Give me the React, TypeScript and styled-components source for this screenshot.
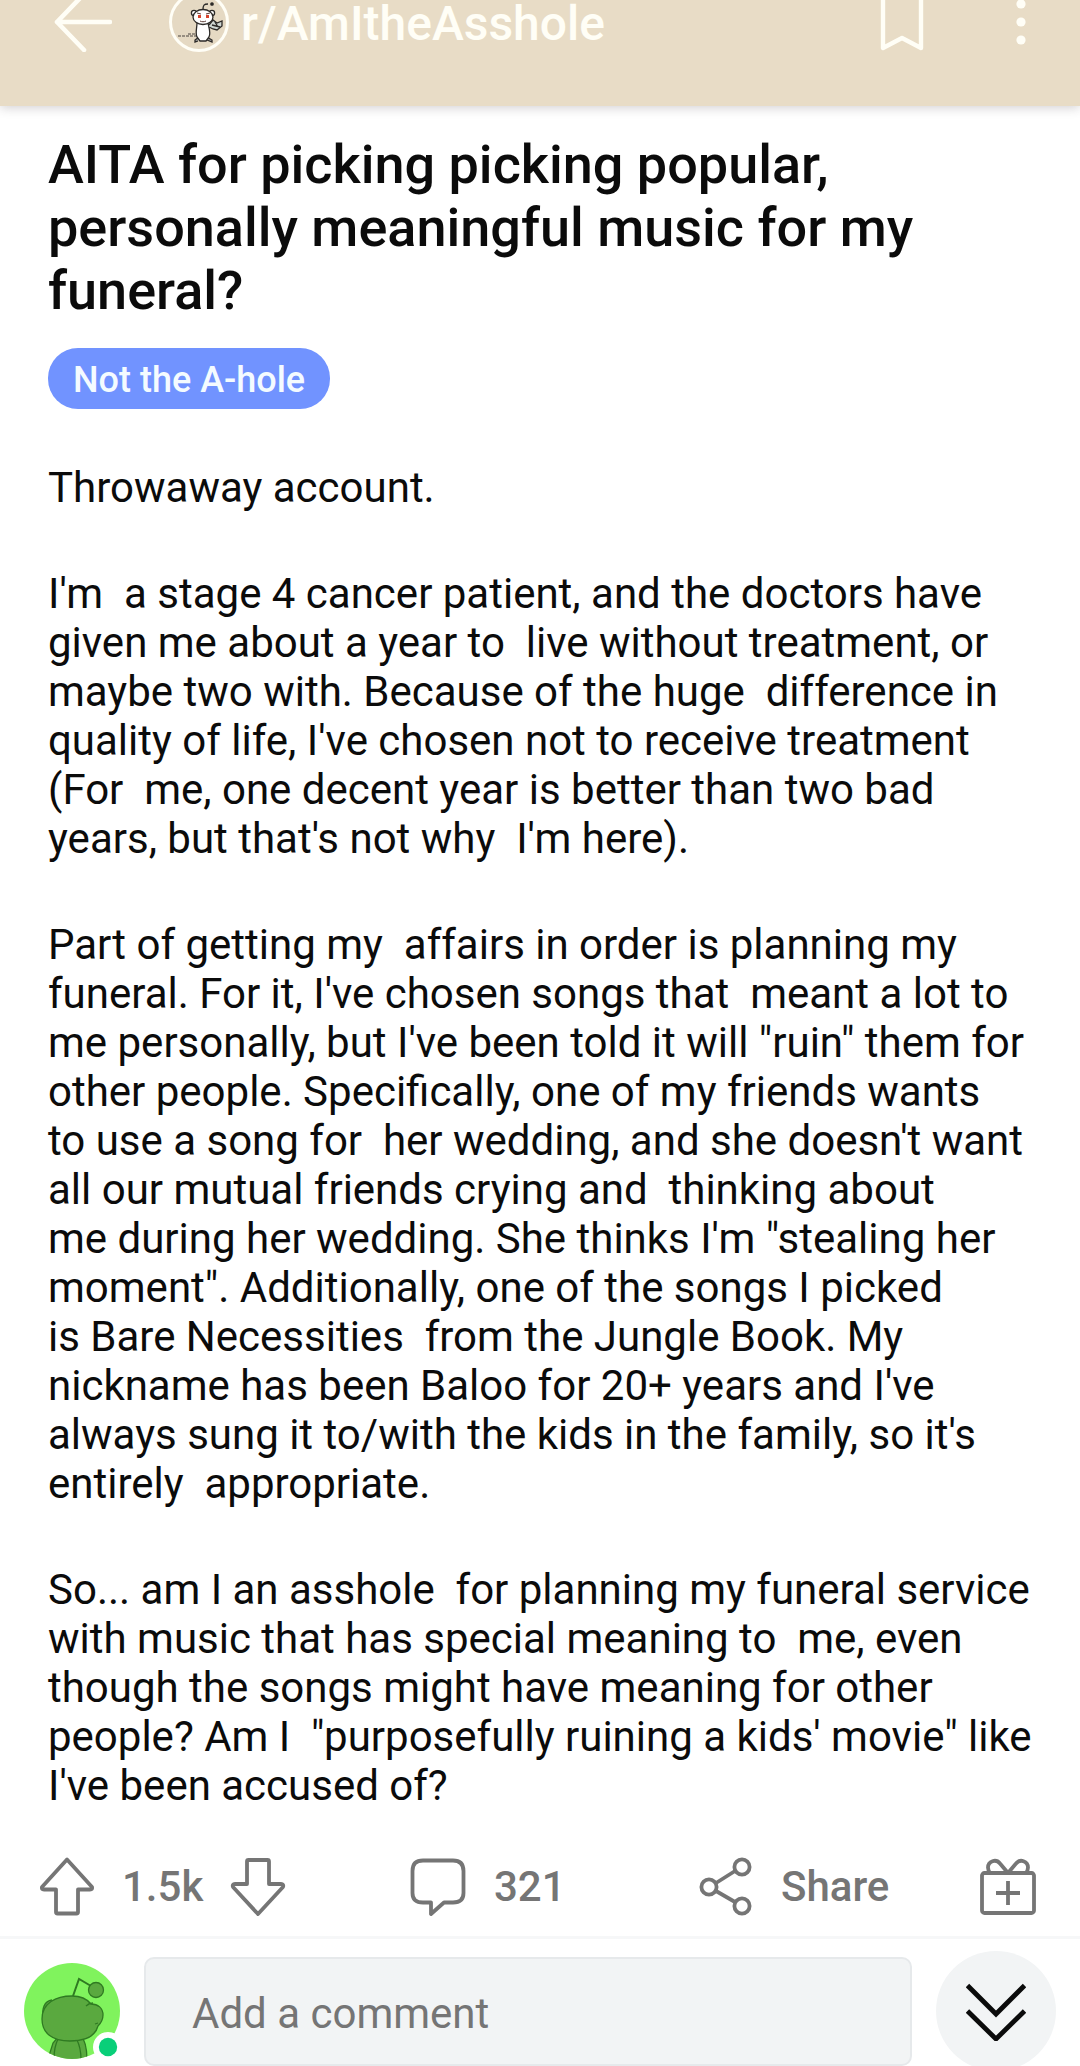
import React from 'react';
import styled, { createGlobalStyle } from 'styled-components';

const GlobalStyle = createGlobalStyle`
  *, *::before, *::after { box-sizing: border-box; }
  body {
    margin: 0;
    background: #fff;
    color: #0b0b0b;
    font-family: Roboto, 'Liberation Sans', sans-serif;
    overflow: hidden;
  }
`;

const Page = styled.div`
  display: flex;
  flex-direction: column;
`;

const Header = styled.header`
  display: flex;
  align-items: center;
  height: 106px;
  padding: 0 54px 62px;
  background: #e8dcc6;
  box-shadow: 0 2px 10px rgba(60, 50, 60, 0.22);
`;

const IconButton = styled.button`
  display: flex;
  flex: none;
  align-items: center;
  gap: 28px;
  padding: 0;
  border: 0;
  background: none;
  color: inherit;
  font: inherit;
  cursor: pointer;

  svg { display: block; flex: none; }
`;

const Label = styled.span`
  padding-top: 3px;
`;

const Community = styled.a`
  display: flex;
  align-items: center;
  gap: 12px;
  margin: 0 auto 0 57px;
  color: #fffef6;
  font-size: 48px;
  line-height: 41px;
  font-weight: 500;
  text-decoration: none;

  svg { display: block; flex: none; }
`;

const HeaderActions = styled.div`
  display: flex;
  align-items: center;
  gap: 92px;
`;

const Post = styled.main`
  padding: 27px 48px 0;
`;

const Title = styled.h1`
  margin: 0 0 26px;
  font-size: 54px;
  line-height: 63px;
  font-weight: 500;
  white-space: pre-line;
`;

const Flair = styled.span`
  display: inline-block;
  padding: 3px 25px 0;
  border-radius: 30px;
  background: #7193ff;
  color: #f4fbff;
  font-size: 36px;
  line-height: 58px;
  font-weight: 500;
  vertical-align: top;
`;

const Body = styled.div`
  display: flex;
  flex-direction: column;
  gap: 57px;
  margin-top: 54px;
  font-size: 42px;
  line-height: 49px;
`;

const Paragraph = styled.p`
  margin: 0;
  white-space: pre;
`;

const Actions = styled.div`
  display: grid;
  grid-template-columns: 371fr 289fr 281fr auto;
  align-items: center;
  padding: 44px 44px 19px 39px;
  border-bottom: 3px solid #f6f7f8;
  color: #757575;
  font-size: 42px;
  line-height: 60px;
  font-weight: 500;
`;

const Votes = styled.div`
  display: flex;
  align-items: center;
  gap: 27px;
`;

const CommentBar = styled.form`
  display: flex;
  align-items: flex-start;
  gap: 24px;
  height: 127px;
  padding: 12px 24px 0;
  overflow: hidden;
`;

const Avatar = styled.div`
  flex: none;
  padding-top: 12px;

  svg { display: block; }
`;

const Field = styled.label`
  display: flex;
  flex: 1;
  min-width: 0;
  padding-top: 6px;
`;

const CommentInput = styled.input`
  width: 100%;
  height: 109px;
  padding: 4px 46px 0;
  border: 2px solid #e6e9eb;
  border-radius: 10px;
  background: #f2f4f5;
  color: #0b0b0b;
  font: 400 42px/49px Roboto, 'Liberation Sans', sans-serif;

  &::placeholder { color: #757575; opacity: 1; }
`;

const JumpButton = styled.button`
  display: flex;
  flex: none;
  align-items: center;
  justify-content: center;
  width: 120px;
  height: 120px;
  padding: 0;
  border: 0;
  border-radius: 50%;
  background: #f2f4f5;
  cursor: pointer;
`;

const BackIcon = () => (
  <svg width="58" height="60" viewBox="0 0 58 60" fill="none" stroke="#fffef6" strokeWidth="4.600" strokeLinecap="round" strokeLinejoin="round">
    <path d="M56 30H3M30 2L3 30l27 28" />
  </svg>
);

const CommunityIcon = () => (
  <svg width="60" height="60" viewBox="0 0 60 60" fill="none">
    <circle cx="30" cy="30" r="28.5" fill="#e5d9c3" stroke="#fffef6" strokeWidth="3" />
    <g stroke="#2c2a28" strokeWidth="1.3">
      <path d="M34 18c0-5 1-6 5-6" />
      <circle cx="43" cy="12" r="1.2" fill="#2c2a28" />
      <circle cx="25" cy="21" r="2.6" fill="#fff" />
      <circle cx="43" cy="21" r="2.6" fill="#fff" />
      <path d="M29 49l-3 1v-2l4-3M38 48l5 2v-2l-5-3" fill="#999" />
      <path d="M28 31h11c1 5 3 10 1 14l-3 4h-6l-3-4c-2-4 0-9 0-14z" fill="#fff" />
      <ellipse cx="34" cy="25" rx="10" ry="7.5" fill="#fff" />
      <path d="M40 33l4-5 4 3 5-2v5l-5 4-4-1-4-2" fill="#cfd6d2" />
      <path d="M46 30l3 5M43 33l8 2" />
    </g>
    <path d="M29 23h3v3h-3zM37 23h3v3h-3z" fill="#d8432c" />
    <path d="M28 21l4 1M41 21l-4 1M31 29c2 1 4 1 6 0" stroke="#5b3a34" />
    <path d="M9 44h18M19 42h8" stroke="#4a4540" strokeWidth="1.2" strokeDasharray="3 1" />
  </svg>
);

const BookmarkIcon = () => (
  <svg width="44" height="60" viewBox="0 0 44 60" fill="none" stroke="#fffef6" strokeWidth="4.400" strokeLinejoin="round">
    <path d="M3 2h38v54L22 46 3 56z" />
  </svg>
);

const MoreIcon = () => (
  <svg width="10" height="46" viewBox="0 0 10 46" fill="#fffef6">
    <circle cx="5" cy="5" r="4.6" />
    <circle cx="5" cy="23" r="4.6" />
    <circle cx="5" cy="41" r="4.6" />
  </svg>
);

const line = {
  fill: 'none',
  stroke: '#757575',
  strokeWidth: 3.8,
  strokeLinejoin: 'round',
} as const;

const UpIcon = () => (
  <svg width="56" height="60" viewBox="0 0 56 60" {...line}>
    <path d="M28 3.5L3 31Q2 33.500 5 33.500H17V56Q17 57.500 18.500 57.500H37.500Q39 57.500 39 56V33.500H51Q54 33.500 53 31z" />
  </svg>
);

const DownIcon = () => (
  <svg width="56" height="60" viewBox="0 0 56 60" {...line}>
    <path d="M28 58L3 31Q2 28 5 28H17V5.500Q17 4 18.500 4H37.500Q39 4 39 5.500V28H51Q54 28 53 31z" />
  </svg>
);

const CommentIcon = () => (
  <svg width="56" height="60" viewBox="0 0 56 60" {...line}>
    <path d="M13 4.500H43Q53.500 4.500 53.500 15V37Q53.500 46.500 43 46.500H34L21 58V46.500H13Q2.500 46.500 2.500 37V15Q2.500 4.500 13 4.500z" />
  </svg>
);

const ShareIcon = () => (
  <svg width="54" height="60" viewBox="0 0 54 60" {...line}>
    <circle cx="10" cy="31" r="7.600" />
    <circle cx="43" cy="11" r="7.600" />
    <circle cx="43" cy="50" r="7.600" />
    <path d="M17 27l19-12M17 35l19 11" />
  </svg>
);

const GiftIcon = () => (
  <svg width="56" height="60" viewBox="0 0 56 60" {...line}>
    <rect x="2" y="17" width="52" height="40" rx="2.500" />
    <path d="M28 17L20 7.500C16 2.500 8 5 8 11.500Q8 14 10 17M28 17L36 7.500C40 2.500 48 5 48 11.500Q48 14 46 17M28 25V49M16 37H40" />
  </svg>
);

const AvatarIcon = () => (
  <svg width="96" height="96" viewBox="0 0 96 96" fill="none">
    <defs>
      <clipPath id="avatar-round"><circle cx="48" cy="48" r="48" /></clipPath>
    </defs>
    <circle cx="48" cy="48" r="48" fill="#80f35d" />
    <g clipPath="url(#avatar-round)" fill="#5aa93f" stroke="#2f7a22" strokeWidth="1.300">
      <path d="M24 96l5-16 6-7h22c4 4 6 14 6 25z" />
      <path d="M34 76c-3 6-4 12-4 20M53 77c3 6 4 12 4 20" />
      <path d="M19 54c-1-8 1-16 9-17" />
      <path d="M49 33L55 16l12 7" fill="none" strokeWidth="2" />
      <circle cx="72" cy="27" r="7.500" />
      <path d="M18 56C18 40 32 33 48 33C57 33 63 36 67 41C74 41 79 45 79 52C79 57 76 61 74 63C71 74 60 78 46 78C28 78 18 70 18 56z" />
      <path d="M62 43c2-2 4-3 7-3M74 60l-3 1" fill="none" />
    </g>
    <circle cx="84" cy="84" r="15" fill="#fff" />
    <circle cx="84" cy="84" r="9.200" fill="#09cf79" />
  </svg>
);

const DoubleChevronIcon = () => (
  <svg width="60" height="60" viewBox="0 0 60 60" fill="none" stroke="#0b0b0b" strokeWidth="4.800">
    <path d="M1.500 4.500L30 33 58.500 4.500M1.500 30L30 58 58.500 30" />
  </svg>
);

const paragraphs = [
  `Throwaway account.`,
  `I'm  a stage 4 cancer patient, and the doctors have
given me about a year to  live without treatment, or
maybe two with. Because of the huge  difference in
quality of life, I've chosen not to receive treatment
(For  me, one decent year is better than two bad
years, but that's not why  I'm here).`,
  `Part of getting my  affairs in order is planning my
funeral. For it, I've chosen songs that  meant a lot to
me personally, but I've been told it will "ruin" them for
other people. Specifically, one of my friends wants
to use a song for  her wedding, and she doesn't want
all our mutual friends crying and  thinking about
me during her wedding. She thinks I'm "stealing her
moment". Additionally, one of the songs I picked
is Bare Necessities  from the Jungle Book. My
nickname has been Baloo for 20+ years and I've
always sung it to/with the kids in the family, so it's
entirely  appropriate.`,
  `So... am I an asshole  for planning my funeral service
with music that has special meaning to  me, even
though the songs might have meaning for other
people? Am I  "purposefully ruining a kids' movie" like
I've been accused of?`,
];

export default function App() {
  return (
    <Page>
      <GlobalStyle />
      <Header>
        <IconButton type="button" aria-label="Back"><BackIcon /></IconButton>
        <Community href="#community">
          <CommunityIcon />
          <Label>r/AmItheAsshole</Label>
        </Community>
        <HeaderActions>
          <IconButton type="button" aria-label="Save"><BookmarkIcon /></IconButton>
          <IconButton type="button" aria-label="More options"><MoreIcon /></IconButton>
        </HeaderActions>
      </Header>

      <Post>
        <Title>{`AITA for picking picking popular,
personally meaningful music for my
funeral?`}</Title>
        <Flair>Not the A-hole</Flair>
        <Body>
          {paragraphs.map((text) => (
            <Paragraph key={text}>{text}</Paragraph>
          ))}
        </Body>
      </Post>

      <Actions>
        <Votes>
          <IconButton type="button" aria-label="Upvote"><UpIcon /></IconButton>
          <Label>1.5k</Label>
          <IconButton type="button" aria-label="Downvote"><DownIcon /></IconButton>
        </Votes>
        <IconButton type="button"><CommentIcon /><Label>321</Label></IconButton>
        <IconButton type="button"><ShareIcon /><Label>Share</Label></IconButton>
        <IconButton type="button" aria-label="Give award"><GiftIcon /></IconButton>
      </Actions>

      <CommentBar>
        <Avatar><AvatarIcon /></Avatar>
        <Field>
          <CommentInput type="text" aria-label="Add a comment" placeholder="Add a comment" />
        </Field>
        <JumpButton type="button" aria-label="Next comment"><DoubleChevronIcon /></JumpButton>
      </CommentBar>
    </Page>
  );
}
